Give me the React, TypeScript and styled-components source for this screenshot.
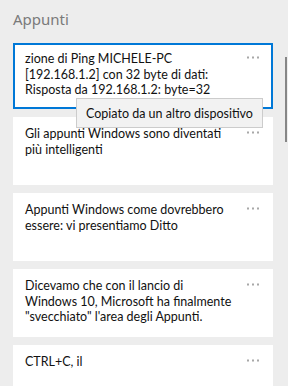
import React from "react";
import styled, { createGlobalStyle } from "styled-components";

const Global = createGlobalStyle`
  html, body { margin: 0; padding: 0; }
  body {
    width: 288px;
    height: 386px;
    overflow: hidden;
    background: #ededed;
    font-family: Lato, "Noto Sans", sans-serif;
  }
`;

const Panel = styled.div`
  position: relative;
  width: 288px;
  height: 386px;
  overflow: hidden;
  box-sizing: border-box;
  padding: 9px 15px 0 13px;
  display: flex;
  flex-direction: column;
  background: #ededed;
`;

const Title = styled.div`
  font-family: "Noto Sans", sans-serif;
  font-size: 15px;
  line-height: 20px;
  color: #7a7a7a;
  margin-bottom: 14px;
`;

const List = styled.div`
  position: relative;
  display: flex;
  flex-direction: column;
  gap: 8px;
`;

const Card = styled.div<{ $selected?: boolean }>`
  position: relative;
  box-sizing: border-box;
  height: ${(p) => (p.$selected ? 66 : 68)}px;
  flex-shrink: 0;
  background: #ffffff;
  border: ${(p) => (p.$selected ? "2px solid #0078d7" : "none")};
  padding: ${(p) => (p.$selected ? "6px 30px 0 10px" : "9px 30px 0 12px")};
  display: flex;
  justify-content: space-between;
  align-items: flex-start;
  overflow: hidden;
`;

const Text = styled.div`
  font-size: 12.5px;
  line-height: 15.7px;
  color: #111111;
  white-space: pre-line;
`;

const More = styled.div<{ $selected?: boolean }>`
  position: absolute;
  right: ${(p) => (p.$selected ? 11 : 13)}px;
  top: ${(p) => (p.$selected ? 11 : 14)}px;
  display: flex;
`;

const Tooltip = styled.div`
  position: absolute;
  left: 63px;
  top: 55px;
  box-sizing: border-box;
  height: 30px;
  padding: 0 9px;
  display: flex;
  align-items: center;
  background: #f2f2f2;
  border: 1px solid #cccccc;
  font-size: 12.5px;
  color: #111111;
  white-space: nowrap;
  z-index: 2;
`;

const ScrollThumb = styled.div`
  position: absolute;
  right: 1px;
  top: 57px;
  width: 2px;
  height: 85px;
  background: #868686;
`;

const Dots = () => (
  <svg width="13" height="3" viewBox="0 0 13 3">
    <rect x="0" y="0.5" width="2" height="2" fill="#a8a8a8" />
    <rect x="5" y="0.5" width="2" height="2" fill="#a8a8a8" />
    <rect x="10" y="0.5" width="2" height="2" fill="#a8a8a8" />
  </svg>
);

const items = [
  {
    text: "zione di Ping MICHELE-PC\n[192.168.1.2] con 32 byte di dati:\nRisposta da 192.168.1.2: byte=32",
    selected: true,
  },
  { text: "Gli appunti Windows sono diventati\npiù intelligenti" },
  { text: "Appunti Windows come dovrebbero\nessere: vi presentiamo Ditto" },
  {
    text: "Dicevamo che con il lancio di\nWindows 10, Microsoft ha finalmente\n\"svecchiato\" l'area degli Appunti.",
  },
  { text: "CTRL+C, il" },
];

export default function App() {
  return (
    <>
      <Global />
      <Panel>
        <Title>Appunti</Title>
        <List>
          {items.map((it, i) => (
            <Card key={i} $selected={it.selected}>
              <Text>{it.text}</Text>
              <More $selected={it.selected}>
                <Dots />
              </More>
            </Card>
          ))}
          <Tooltip>Copiato da un altro dispositivo</Tooltip>
        </List>
        <ScrollThumb />
      </Panel>
    </>
  );
}
